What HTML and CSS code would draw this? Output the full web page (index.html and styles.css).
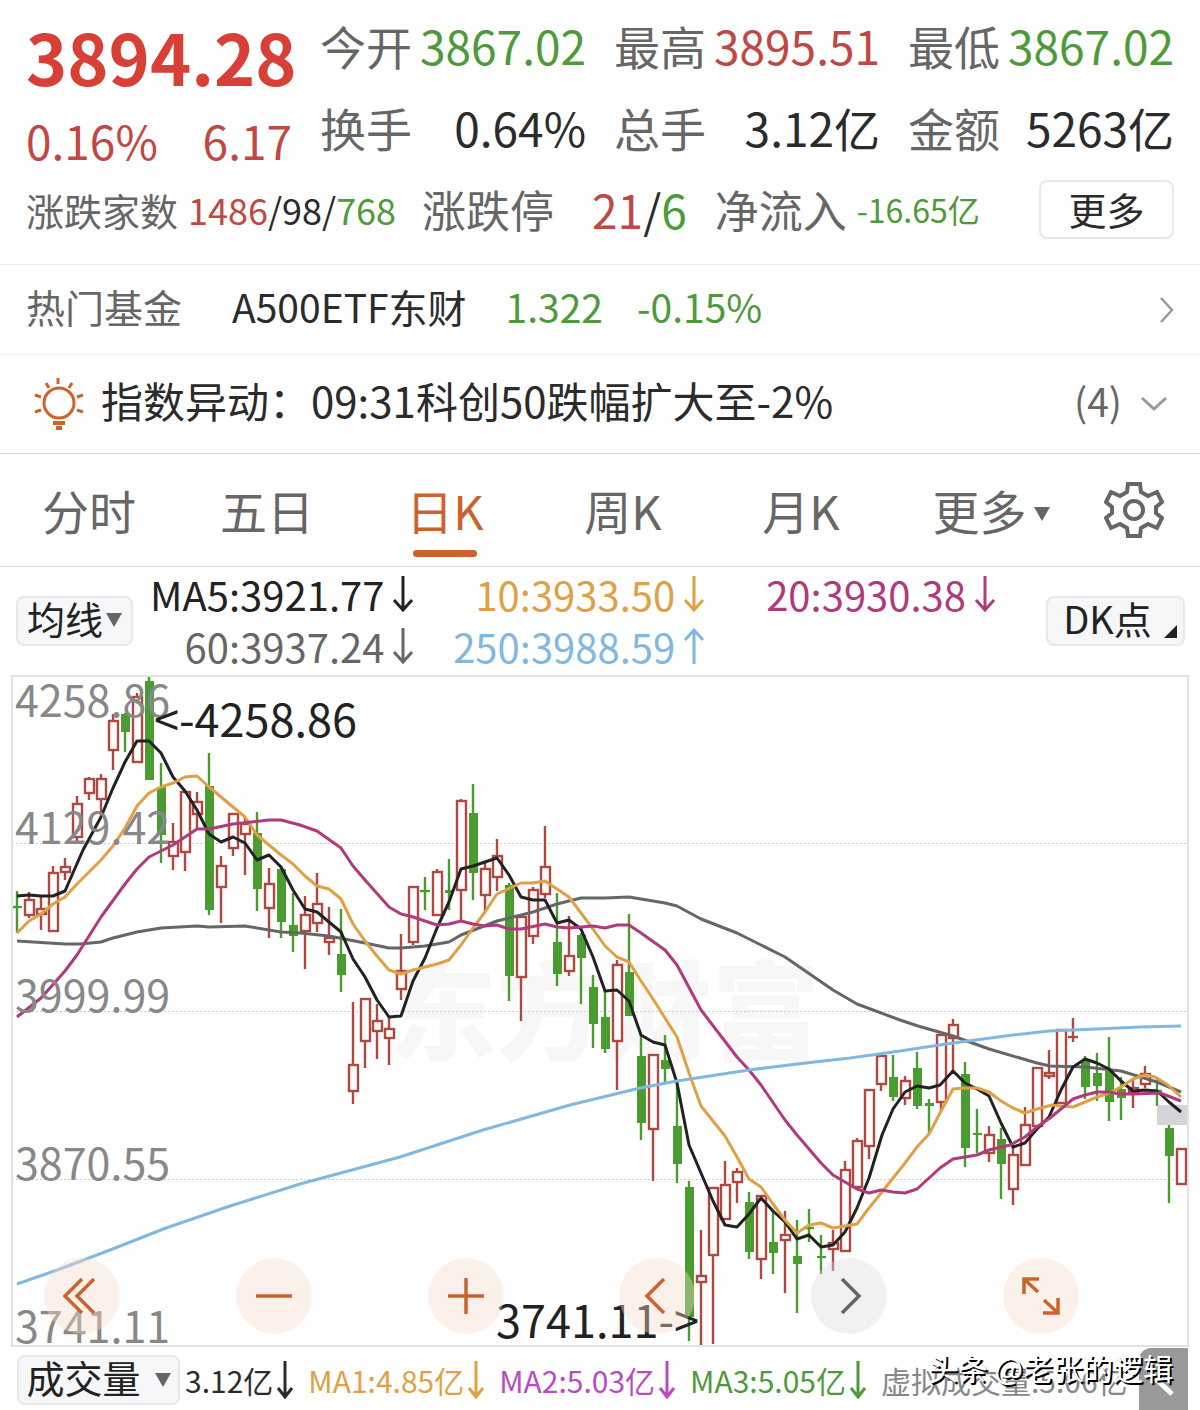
FILE: index.html
```html
<!DOCTYPE html>
<html lang="zh-CN">
<head>
  <meta charset="UTF-8">
  <meta name="viewport" content="width=device-width, initial-scale=1.0">
  <title>上证指数</title>
  <link rel="stylesheet" href="styles.css">
</head>
<body>
  <header class="quote">
    <div class="quote-grid">
      <div class="quote-main">
        <div class="price">3894.28</div>
        <div class="change"><span>0.16%</span><span>6.17</span></div>
      </div>
      <dl class="stats">
        <div class="stat"><dt>今开</dt><dd class="down">3867.02</dd></div>
        <div class="stat"><dt>最高</dt><dd class="up">3895.51</dd></div>
        <div class="stat"><dt>最低</dt><dd class="down">3867.02</dd></div>
        <div class="stat"><dt>换手</dt><dd>0.64%</dd></div>
        <div class="stat"><dt>总手</dt><dd>3.12亿</dd></div>
        <div class="stat"><dt>金额</dt><dd>5263亿</dd></div>
      </dl>
    </div>
    <div class="breadth">
      <div class="breadth-item small">
        <span class="label">涨跌家数</span>
        <span class="count"><span class="up">1486</span>/98/<span class="down">768</span></span>
      </div>
      <div class="breadth-item limit">
        <span class="label">涨跌停</span>
        <span class="count"><span class="up">21</span>/<span class="down">6</span></span>
      </div>
      <div class="breadth-item flow">
        <span class="label">净流入</span>
        <span class="count down">-16.65亿</span>
      </div>
      <button class="more-btn" type="button">更多</button>
    </div>
  </header>

  <a class="fund" href="#fund">
    <span class="label">热门基金</span>
    <span class="fund-name">A500ETF东财</span>
    <span class="fund-price down">1.322</span>
    <span class="down">-0.15%</span>
    <svg class="chevron" width="14" height="26" viewBox="0 0 14 26"><path d="M1 1 L12 13 L1 25"/></svg>
  </a>

  <div class="alert">
    <svg class="bulb" width="52" height="52" viewBox="0 0 52 52">
      <circle cx="27" cy="25" r="15"/>
      <path d="M26 0v6M14 5l3 5M40 5l-3 5M3 17l6 2M51 17l-6 2M3 34l6-2M51 34l-6-2"/>
      <path class="thick" d="M21 45h12M24 50h6"/>
    </svg>
    <span class="alert-text">指数异动：09:31科创50跌幅扩大至-2%</span>
    <span class="alert-count">(4)</span>
    <svg class="chevron" width="28" height="16" viewBox="0 0 28 16"><path d="M2 2 L14 13 L26 2"/></svg>
  </div>

  <nav class="tabs">
    <button class="tab" type="button">分时</button>
    <button class="tab" type="button">五日</button>
    <button class="tab active" type="button">日K</button>
    <button class="tab" type="button">周K</button>
    <button class="tab" type="button">月K</button>
    <button class="tab tab-more" type="button">更多<span class="caret"></span></button>
    <button class="settings" type="button" aria-label="设置">
      <svg width="60" height="60" viewBox="0 0 60 60">
        <path d="M24 4h12l1 8 7 4 9-4 5 10-6 5v6l6 5-5 10-9-4-7 4-1 8H24l-1-8-7-4-9 4-5-10 6-5v-6l-6-5 5-10 9 4 7-4z"/>
        <circle cx="30" cy="30" r="9"/>
      </svg>
    </button>
  </nav>

  <section class="averages">
    <button class="chip" type="button">均线<span class="caret"></span></button>
    <div class="average-list">
      <span class="ma5">MA5:3921.77<svg class="arrow" viewBox="0 0 22 36"><path d="M11 0v34M2 24l9 10 9-10"/></svg></span>
      <span class="ma10">10:3933.50<svg class="arrow" viewBox="0 0 22 36"><path d="M11 0v34M2 24l9 10 9-10"/></svg></span>
      <span class="ma20">20:3930.38<svg class="arrow" viewBox="0 0 22 36"><path d="M11 0v34M2 24l9 10 9-10"/></svg></span>
      <span class="ma60">60:3937.24<svg class="arrow" viewBox="0 0 22 36"><path d="M11 0v34M2 24l9 10 9-10"/></svg></span>
      <span class="ma250">250:3988.59<svg class="arrow" viewBox="0 0 22 36"><path d="M11 36V2M2 12l9-10 9 10"/></svg></span>
    </div>
    <button class="chip chip-dk" type="button">DK点<span class="corner"></span></button>
  </section>

  <section class="chart">
    <svg id="kline" viewBox="12 676 1176 670"></svg>
    <div class="chart-tools">
      <button class="tool" type="button" aria-label="最早"><svg viewBox="0 0 76 76"><path d="M38 21 L21 38 L38 55M50 21 L33 38 L50 55"/></svg></button>
      <button class="tool" type="button" aria-label="缩小"><svg viewBox="0 0 76 76"><path d="M20 38h36"/></svg></button>
      <button class="tool" type="button" aria-label="放大"><svg viewBox="0 0 76 76"><path d="M20 38h36M38 20v36"/></svg></button>
      <button class="tool" type="button" aria-label="左移"><svg viewBox="0 0 76 76"><path d="M45 21 L28 38 L45 55"/></svg></button>
      <button class="tool tool-gray" type="button" aria-label="右移"><svg viewBox="0 0 76 76"><path d="M31 21 L48 38 L31 55"/></svg></button>
      <button class="tool" type="button" aria-label="全屏"><svg viewBox="0 0 76 76"><path d="M21 36V21h15M21 21l14 13M55 40v15H40M55 55L41 42"/></svg></button>
    </div>
  </section>

  <footer class="volume">
    <button class="chip chip-volume" type="button">成交量<span class="caret"></span></button>
    <span class="vol">3.12亿<svg class="arrow" viewBox="0 0 18 38"><path d="M9 0v36M2 27l7 9 7-9"/></svg></span>
    <span class="vol vol1">MA1:4.85亿<svg class="arrow" viewBox="0 0 18 38"><path d="M9 0v36M2 27l7 9 7-9"/></svg></span>
    <span class="vol vol2">MA2:5.03亿<svg class="arrow" viewBox="0 0 18 38"><path d="M9 0v36M2 27l7 9 7-9"/></svg></span>
    <span class="vol vol3">MA3:5.05亿<svg class="arrow" viewBox="0 0 18 38"><path d="M9 0v36M2 27l7 9 7-9"/></svg></span>
    <span class="vol vol-virtual">虚拟成交量:5.06亿</span>
    <button class="collapse" type="button" aria-label="收起"><svg viewBox="0 0 49 62"><path d="M33 18 L18 32 L33 46"/></svg></button>
    <span class="credit">头条 @老张的逻辑</span>
  </footer>

  <script src="chart.js"></script>
</body>
</html>
```
FILE: styles.css
```css
/* General */
* {
  box-sizing: border-box;
}

body {
  margin: 0;
  background: #fff;
  color: #2b2b2b;
  font-family: "Noto Sans CJK SC", sans-serif;
  font-size: 38px;
  overflow-x: hidden;
}

button {
  font: inherit;
  color: inherit;
  background: none;
  border: none;
  padding: 0;
  cursor: pointer;
}

svg {
  display: block;
  fill: none;
}

.up {
  color: #c04844;
}

.down {
  color: #4e9a3a;
}

.label {
  color: #666;
}

/* Quote header */
.quote {
  padding: 4px 26px 0;
  height: 265px;
  border-bottom: 1px solid #ececec;
}

.quote-grid {
  display: grid;
  grid-template-columns: minmax(0, 266fr) minmax(0, 854fr);
  gap: 28px;
  height: 166px;
}

.price {
  font-size: 70px;
  line-height: 104px;
  font-weight: 700;
  color: #d83f37;
}

.change {
  display: flex;
  justify-content: space-between;
  font-size: 46px;
  line-height: 64px;
  color: #c04844;
}

.stats {
  display: grid;
  grid-template-columns: repeat(3, 1fr);
  column-gap: 28px;
  margin: 0;
  align-content: start;
}

.stat {
  display: flex;
  justify-content: space-between;
  font-size: 46px;
  line-height: 82px;
  white-space: nowrap;
}

.stat dt {
  color: #666;
}

.stat dd {
  margin: 0;
}

.breadth {
  display: flex;
  align-items: center;
  height: 78px;
  white-space: nowrap;
}

.breadth-item {
  display: flex;
  align-items: center;
  gap: 10px;
  font-size: 44px;
}

.small {
  margin-right: 26px;
}

.small .label {
  font-size: 38px;
}

.small .count {
  font-size: 36px;
}

.limit {
  gap: 38px;
  margin-right: 28px;
}

.limit .count {
  font-size: 46px;
}

.flow .count {
  font-size: 32px;
}

.more-btn {
  margin-left: auto;
  width: 135px;
  height: 59px;
  line-height: 50px;
  border: 2px solid #e8e8e8;
  border-radius: 8px;
}

/* Fund row */
.fund {
  display: flex;
  align-items: center;
  height: 90px;
  padding: 0 26px;
  border-bottom: 1px solid #f0f0f0;
  color: #2b2b2b;
  font-size: 39px;
  line-height: 60px;
  text-decoration: none;
}

.fund span {
  padding-bottom: 8px;
}

.fund-name {
  margin: 0 39px 0 50px;
}

.fund-price {
  margin-right: 34px;
}

.chevron {
  margin-left: auto;
  stroke: #999;
  stroke-width: 2.5;
}

/* Index alert */
.alert {
  display: flex;
  align-items: center;
  height: 99px;
  padding: 0 32px;
  border-bottom: 1px solid #d8d8d8;
  font-size: 42px;
  line-height: 60px;
}

.alert span {
  padding-bottom: 8px;
}

.bulb {
  margin-right: 17px;
  stroke: #d0622e;
  stroke-width: 3;
  overflow: visible;
}

.bulb .thick {
  stroke-width: 4;
}

.alert-count {
  margin-left: auto;
  font-size: 39px;
  color: #666;
}

.alert .chevron {
  margin-left: 18px;
  stroke-width: 3;
}

/* Period tabs */
.tabs {
  display: flex;
  height: 113px;
  border-bottom: 1px solid #d8d8d8;
}

.tab {
  flex: 1;
  position: relative;
  font-size: 47px;
  line-height: 104px;
  color: #666;
  white-space: nowrap;
}

.tab.active {
  color: #cb6330;
}

.tab.active::after {
  content: "";
  position: absolute;
  left: calc(50% - 32px);
  bottom: 9px;
  width: 64px;
  height: 7px;
  border-radius: 4px;
  background: #cb6330;
}

.tab-more {
  text-indent: 24px;
}

.caret {
  display: inline-block;
  vertical-align: middle;
  margin: 0 0 6px 7px;
  border-left: 8px solid transparent;
  border-right: 8px solid transparent;
  border-top: 14px solid #666;
}

.settings {
  width: 132px;
}

.settings svg {
  margin: 0 auto;
  stroke: #666;
  stroke-width: 4;
}

/* Moving averages */
.averages {
  display: flex;
  align-items: center;
  height: 109px;
  padding: 0 15px 2px 16px;
}

.chip {
  height: 50px;
  width: 117px;
  line-height: 38px;
  padding-bottom: 6px;
  border: 2px solid #e6e8ea;
  border-radius: 8px;
  background: #f6f7f9;
  color: #222;
  white-space: nowrap;
}

.chip .caret {
  margin-left: 3px;
}

.chip-dk {
  position: relative;
  width: 139px;
  padding-right: 16px;
}

.corner {
  position: absolute;
  right: 6px;
  bottom: 6px;
  border-left: 13px solid transparent;
  border-bottom: 13px solid #222;
}

.average-list {
  flex: 1;
  display: grid;
  grid-template-columns: repeat(3, 1fr);
  column-gap: 28px;
  margin: 0 50px 2px 17px;
  font-size: 40px;
  line-height: 52px;
}

.average-list span {
  display: flex;
  justify-content: flex-end;
  align-items: center;
  gap: 8px;
  white-space: nowrap;
}

.arrow {
  width: 22px;
  height: 36px;
  stroke: currentColor;
  stroke-width: 3;
}

.ma5 {
  color: #222;
}

.ma10 {
  color: #e0a045;
}

.ma20 {
  color: #b03a7c;
}

.ma60 {
  color: #666;
}

.ma250 {
  color: #82b8e0;
}

/* K-line chart */
.chart {
  position: relative;
  margin: 0 12px;
}

#kline {
  width: 100%;
  height: auto;
  overflow: visible;
  outline: 2px solid #e2e2e2;
  outline-offset: -1px;
}

#kline .grid {
  stroke: #ccc;
  stroke-width: 1;
  stroke-dasharray: 2 2;
}

#kline .mark {
  fill: #f7f7f7;
  font-size: 108px;
  font-weight: 900;
}

#kline .scale {
  fill: #888;
  font-size: 43px;
}

#kline .note {
  fill: #222;
  font-size: 45px;
}

#kline .rise {
  fill: #fff;
  stroke: #b04842;
  stroke-width: 2.4;
}

#kline .fall {
  fill: #4a9b30;
  stroke: #4a9b30;
  stroke-width: 2.4;
}

#kline rect.fall {
  stroke: none;
}

#kline .line {
  stroke-width: 3;
  stroke-linejoin: round;
}

#kline .gap {
  fill: #c9c9d0;
  opacity: 0.8;
}

.chart-tools {
  position: absolute;
  left: 32px;
  right: 109px;
  bottom: 12px;
  display: flex;
  justify-content: space-between;
}

.tool {
  width: 76px;
  height: 76px;
  border-radius: 50%;
  background: rgba(244, 217, 202, 0.4);
}

.tool svg {
  stroke: #cb6330;
  stroke-width: 3.5;
}

.tool-gray {
  background: rgba(220, 220, 220, 0.4);
}

.tool-gray svg {
  stroke: #666;
}

/* Volume row */
.volume {
  position: relative;
  display: flex;
  align-items: center;
  gap: 14px;
  height: 64px;
  padding: 4px 12px 0 17px;
  overflow: hidden;
}

.chip-volume {
  flex: none;
  width: 163px;
  margin-right: -9px;
}

.chip-volume .caret {
  margin-left: 14px;
}

.vol {
  display: flex;
  align-items: center;
  gap: 3px;
  font-size: 30px;
  line-height: 44px;
  white-space: nowrap;
}

.vol .arrow {
  width: 18px;
  height: 38px;
}

.vol1 {
  color: #e0a045;
}

.vol2 {
  color: #b84cc0;
}

.vol3 {
  color: #4e9a3a;
}

.vol-virtual {
  color: #888;
}

.collapse {
  position: absolute;
  right: 12px;
  top: 2px;
  width: 49px;
  height: 62px;
  border-radius: 12px 0 0 0;
  background: #999;
}

.collapse svg {
  stroke: #fff;
  stroke-width: 5;
}

.credit {
  position: absolute;
  right: 27px;
  top: 0;
  font-size: 30px;
  line-height: 42px;
  color: #fff;
  text-shadow: 2px 2px 0 #000;
}
```
FILE: chart.js
```js
const kline = document.getElementById("kline");

// [rise, high, body top, body bottom, low]
const candles = [
  [0,891,906,908,933],[1,892,899,915,918],[1,897,908,914,930],[1,866,872,931,931],[1,858,866,872,880],
  [1,796,803,837,842],[1,777,778,793,800],[1,774,778,799,812],[1,714,720,750,770],[0,713,713,732,752],
  [1,693,696,762,762],[0,676,680,780,780],[0,763,786,835,863],[1,823,841,856,870],[1,791,791,852,871],
  [1,792,801,814,830],[0,753,785,910,915],[1,856,865,887,923],[1,813,813,848,856],[1,817,823,834,875],
  [0,812,832,889,911],[1,868,883,908,938],[0,868,868,922,938],[0,893,924,936,952],[1,896,914,931,969],
  [1,873,903,923,932],[1,907,937,942,955],[0,909,953,975,992],[1,1002,1064,1091,1104],[1,998,998,1041,1068],
  [1,1004,1020,1031,1059],[1,1017,1028,1038,1065],[1,934,970,989,1000],[1,886,886,942,945],[0,877,890,892,910],
  [1,869,871,915,915],[0,859,889,893,910],[1,799,800,890,921],[0,784,812,873,900],[1,863,868,895,913],
  [1,839,855,877,891],[0,883,884,976,1001],[1,916,916,977,1021],[1,887,889,936,944],[1,826,866,894,898],
  [0,893,941,974,986],[1,916,955,971,976],[0,933,934,958,1004],[0,975,986,1024,1048],[0,991,1016,1049,1053],
  [1,960,964,1041,1090],[0,914,971,1016,1016],[0,1035,1055,1123,1140],[1,1054,1054,1129,1181],[0,1035,1059,1069,1082],
  [0,1082,1125,1164,1183],[0,1181,1186,1317,1341],[1,1230,1275,1282,1347],[1,1187,1187,1255,1344],[1,1161,1184,1219,1219],
  [1,1168,1171,1182,1203],[0,1192,1201,1252,1259],[1,1195,1195,1259,1279],[0,1210,1241,1253,1274],[1,1211,1234,1240,1293],
  [0,1220,1255,1264,1313],[0,1209,1227,1229,1242],[0,1235,1255,1258,1274],[1,1230,1242,1249,1271],[1,1161,1169,1251,1251],
  [1,1138,1140,1187,1187],[1,1089,1089,1146,1159],[1,1055,1055,1084,1091],[0,1055,1076,1097,1101],[1,1076,1080,1098,1105],
  [0,1052,1067,1106,1109],[0,1099,1102,1106,1133],[1,1034,1034,1102,1110],[1,1019,1024,1038,1071],[0,1062,1073,1148,1167],
  [0,1109,1132,1135,1153],[1,1126,1134,1153,1162],[0,1128,1138,1164,1199],[1,1147,1154,1189,1205],[1,1107,1124,1165,1165],
  [1,1067,1067,1126,1126],[1,1050,1072,1076,1079],[1,1029,1029,1103,1103],[1,1018,1036,1038,1042],[0,1056,1060,1087,1099],
  [0,1053,1072,1086,1101],[0,1037,1070,1102,1121],[0,1077,1088,1098,1120],[1,1080,1087,1092,1108],[1,1066,1073,1084,1088],
  [0,1078,1090,1092,1106],[0,1125,1127,1156,1203],[1,1148,1148,1184,1184]
];

const averages = [
  ["#666", "17,941 65,944 80,944 101,942 113,938 137,932 161,928 197,926 209,927 245,926 281,932 300,933 329,936 365,943 389,948 401,948 425,946 449,942 461,935 497,921 533,912 557,904 581,898 605,898 629,897 641,899 665,903 677,906 701,919 737,933 761,945 785,957 833,990 857,1004 900,1020 918,1026 953,1036 989,1049 1037,1063 1050,1066 1085,1067 1121,1071 1157,1082 1181,1092"],
  ["#222", "17,896 29,895 41,896 53,896 65,891 83,850 101,817 113,788 125,762 137,741 149,741 161,753 173,777 185,791 197,810 209,834 221,842 233,837 245,843 257,860 269,855 281,867 293,890 305,909 317,912 341,932 353,959 365,977 377,1000 389,1017 401,1016 413,981 425,958 437,928 449,902 461,869 473,866 485,862 497,858 509,875 521,897 533,900 545,900 557,923 569,920 581,929 593,957 605,991 617,990 629,1001 641,1035 653,1042 665,1045 677,1083 689,1145 701,1173 713,1201 725,1225 737,1227 749,1214 761,1198 773,1211 785,1222 797,1239 809,1235 821,1247 833,1245 845,1232 857,1208 869,1178 882,1135 893,1109 905,1092 917,1086 929,1088 940,1085 953,1071 965,1083 977,1089 989,1096 1001,1123 1013,1147 1025,1143 1037,1129 1049,1117 1061,1090 1073,1067 1085,1059 1097,1063 1109,1069 1121,1081 1133,1091 1145,1090 1157,1091 1169,1102 1181,1112"],
  ["#e0a045", "17,933 29,921 41,914 53,904 65,897 77,884 101,860 113,846 125,828 137,806 149,793 161,787 173,783 185,777 197,776 209,787 233,807 245,817 257,835 281,855 293,864 305,876 317,886 329,889 341,899 353,924 365,941 377,956 389,970 401,974 413,970 437,964 449,960 461,945 473,928 485,912 497,894 521,883 533,883 545,881 557,889 569,897 581,913 593,929 605,946 617,957 629,962 641,981 653,999 677,1037 689,1073 701,1106 725,1136 737,1157 749,1179 761,1187 773,1204 785,1220 797,1233 809,1225 821,1223 833,1228 857,1224 869,1208 882,1192 905,1163 917,1147 929,1134 940,1113 953,1089 965,1088 977,1088 989,1092 1001,1101 1013,1108 1025,1113 1037,1109 1052,1105 1061,1106 1073,1107 1085,1102 1097,1097 1109,1093 1121,1087 1133,1079 1145,1075 1155,1077 1168,1085 1181,1097"],
  ["#b03a7c", "17,1017 41,998 65,971 77,955 101,917 125,884 137,869 149,857 173,845 197,829 209,829 233,824 269,820 281,820 300,825 317,831 341,848 353,866 365,880 389,907 401,914 413,917 437,925 449,924 461,921 473,924 485,926 497,925 509,929 521,929 545,924 557,927 569,928 581,927 593,926 605,928 617,925 629,925 641,933 665,950 677,965 701,1010 737,1057 749,1070 761,1085 785,1120 797,1135 821,1163 833,1175 857,1189 869,1193 881,1190 893,1192 905,1193 917,1189 940,1168 953,1159 977,1155 989,1150 1010,1145 1025,1137 1037,1127 1050,1118 1073,1099 1085,1095 1097,1092 1109,1092 1120,1094 1133,1094 1160,1093 1168,1096 1181,1101"],
  ["#82b8e0", "17,1284 60,1269 110,1250 166,1228 230,1206 300,1184 400,1157 483,1130 570,1105 640,1088 677,1081 749,1070 797,1064 850,1058 900,1051 953,1043 1013,1035 1049,1031 1097,1029 1140,1027 1181,1026"]
];

const scale = [["4258.86", 717], ["4129.42", 844], ["3999.99", 1012], ["3870.55", 1180], ["3741.11", 1343]];

const drawCandle = ([rise, high, top, bottom, low], i) => {
  const x = 17 + i * 12;
  const name = rise ? "rise" : "fall";
  // thin bodies are drawn as a plain cross
  const body = bottom - top < 3
    ? `<path class="${name}" d="M${x - 5} ${top + 1}h10"/>`
    : `<rect class="${name}" x="${x - 4}" y="${top + 1}" width="9" height="${bottom - top - 1}"/>`;
  return `<path class="${name}" d="M${x} ${high}V${top + 1}M${x} ${bottom}V${low}"/>${body}`;
};

kline.innerHTML = `
  <text class="mark" x="388" y="1052">东方财富</text>
  <path class="grid" d="M12 843.5H1188M12 1011.5H1188M12 1179.5H1188"/>
  ${candles.map(drawCandle).join("")}
  <rect class="gap" x="1157" y="1105" width="31" height="20"/>
  ${averages.map(([color, points]) => `<polyline class="line" stroke="${color}" points="${points}"/>`).join("")}
  ${scale.map(([value, y]) => `<text class="scale" x="15" y="${y}">${value}</text>`).join("")}
  <text class="note" x="154" y="737">&lt;-4258.86</text>
  <text class="note" x="699" y="1338" text-anchor="end">3741.11-&gt;</text>
`;
```
